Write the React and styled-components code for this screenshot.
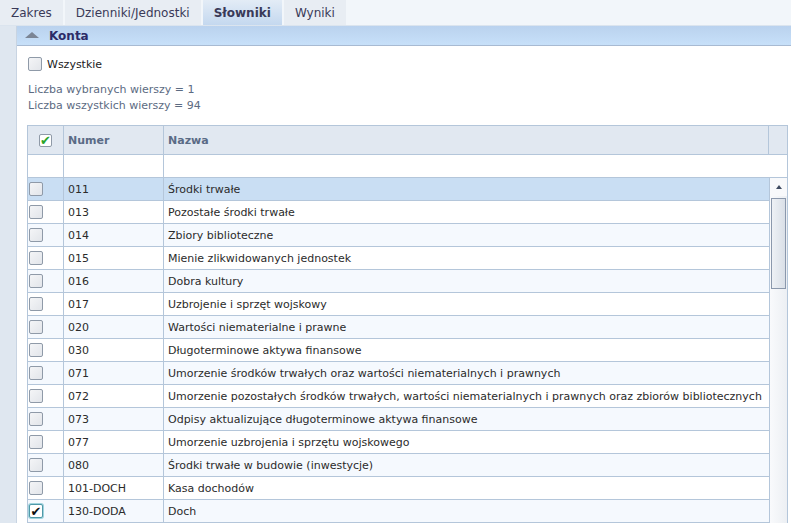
import React from 'react';
import styled, { createGlobalStyle } from 'styled-components';

const GlobalStyle = createGlobalStyle`
    html, body {
        margin: 0;
        padding: 0;
        background: #ffffff;
        overflow: hidden;
    }
    body {
        font-family: "DejaVu Sans", Verdana, sans-serif;
    }
`;

const Page = styled.div`
    width: 791px;
    height: 523px;
    overflow: hidden;
    display: flex;
    flex-direction: column;
`;

const TabBar = styled.div`
    flex: none;
    display: flex;
    gap: 2px;
    height: 26px;
    background: #f2f6fa;
    border-bottom: 1px solid #dbe4ee;
    box-sizing: border-box;
`;

const Tab = styled.div`
    padding: 0 11px;
    line-height: 26px;
    font-size: 12px;
    color: #3a3a58;
    font-weight: ${props => props.active ? 'bold' : 'normal'};
    background: ${props => props.active
        ? 'linear-gradient(180deg, #e3ecf6 0%, #c4d8ef 100%)'
        : '#e8edf3'};
`;

const Main = styled.div`
    flex: 1;
    display: flex;
    min-height: 0;
`;

const SideStrip = styled.div`
    flex: none;
    width: 16px;
    background: #dfe7f0;
    border-right: 1px solid #c8d4e2;
`;

const Panel = styled.div`
    flex: 1;
    display: flex;
    flex-direction: column;
    min-width: 0;
`;

const PanelHeader = styled.div`
    flex: none;
    height: 19px;
    display: flex;
    align-items: center;
    background: linear-gradient(180deg, #bad2ee 0%, #c7e0f9 100%);
    border-bottom: 1px solid #a8bad2;
`;

const CollapseArrow = styled.span`
    width: 0;
    height: 0;
    margin: 0 10px 2px 8px;
    border-left: 7px solid transparent;
    border-right: 7px solid transparent;
    border-bottom: 6px solid #7b8595;
`;

const PanelTitle = styled.span`
    font-size: 12px;
    font-weight: bold;
    color: #2c2c68;
`;

const PanelBody = styled.div`
    flex: none;
    padding: 11px 5px 0 10px;
`;

const CheckRow = styled.label`
    display: flex;
    align-items: center;
    gap: 5px;
    margin-left: 1px;
    font-size: 11px;
    color: #222222;
    height: 14px;
`;

const Box = styled.span`
    box-sizing: border-box;
    display: inline-flex;
    align-items: center;
    justify-content: center;
    width: ${props => props.size}px;
    height: ${props => props.size}px;
    flex: none;
    border: 1px solid ${props => props.focused ? '#4f98a8' : '#8f9aa8'};
    box-shadow: ${props => props.focused ? '0 0 0 1px #9fd3dd' : 'none'};
    border-radius: 2px;
    background: ${props => props.checked
        ? '#ffffff'
        : 'linear-gradient(135deg, #f4f5f7 0%, #e2e5ea 100%)'};
    color: ${props => props.tone === 'green' ? '#2aa52a' : '#111111'};
    font-size: 13px;
    font-weight: bold;
    line-height: 1;
    overflow: hidden;
`;

const Info = styled.div`
    margin-top: 11px;
    margin-left: 1px;
    font-size: 11px;
    line-height: 16px;
    color: #5c6b82;
`;

const Grid = styled.div`
    margin-top: 11px;
    width: 759px;
    border-left: 1px solid #b4c6da;
    border-right: 1px solid #b4c6da;
    border-top: 1px solid #b4c6da;
    font-size: 11px;
    color: #2b2b2b;
`;

const HeadRow = styled.div`
    display: grid;
    grid-template-columns: 36px 100px 605px 1fr;
    height: 28px;
    background: #e1e8f1;
    border-bottom: 1px solid #b4c6da;
`;

const HeadCell = styled.div`
    display: flex;
    align-items: center;
    justify-content: ${props => props.center ? 'center' : 'flex-start'};
    padding-left: ${props => props.center ? 0 : 4}px;
    border-right: ${props => props.last ? 'none' : '1px solid #b4c6da'};
    font-weight: bold;
    color: #5a6b86;
`;

const FilterRow = styled.div`
    display: grid;
    grid-template-columns: 36px 100px 1fr;
    height: 22px;
    background: #ffffff;
    border-bottom: 1px solid #b4c6da;
`;

const FilterCell = styled.div`
    border-right: ${props => props.last ? 'none' : '1px solid #b4c6da'};
`;

const BodyArea = styled.div`
    display: flex;
`;

const Rows = styled.div`
    width: 741px;
    border-right: 1px solid #b4c6da;
`;

const Row = styled.div`
    display: grid;
    grid-template-columns: 36px 100px 1fr;
    height: 22px;
    border-bottom: 1px solid #b4c6da;
    background: ${props => props.selected ? '#c9def3' : props.odd ? '#ffffff' : '#f5f9fe'};
`;

const Cell = styled.div`
    display: flex;
    align-items: center;
    padding-left: ${props => props.box ? 1 : 4}px;
    border-right: ${props => props.last ? 'none' : '1px solid #b4c6da'};
    white-space: nowrap;
    overflow: hidden;
`;

const ScrollBar = styled.div`
    flex: 1;
    display: flex;
    flex-direction: column;
    align-items: center;
    background: linear-gradient(90deg, #f9fafc 0%, #eceff3 100%);
`;

const ScrollUp = styled.div`
    width: 16px;
    height: 18px;
    display: flex;
    align-items: center;
    justify-content: center;
    background: #f8f9fb;
    &::after {
        content: '';
        border-left: 3px solid transparent;
        border-right: 3px solid transparent;
        border-bottom: 4px solid #3e4a60;
    }
`;

const ScrollThumb = styled.div`
    box-sizing: border-box;
    margin-top: 2px;
    width: 15px;
    height: 91px;
    border: 1px solid #8b98ac;
    background: linear-gradient(90deg, #eef1f5 0%, #d9dfe7 100%);
`;

const accounts = [
    ['011', 'Środki trwałe'],
    ['013', 'Pozostałe środki trwałe'],
    ['014', 'Zbiory biblioteczne'],
    ['015', 'Mienie zlikwidowanych jednostek'],
    ['016', 'Dobra kultury'],
    ['017', 'Uzbrojenie i sprzęt wojskowy'],
    ['020', 'Wartości niematerialne i prawne'],
    ['030', 'Długoterminowe aktywa finansowe'],
    ['071', 'Umorzenie środków trwałych oraz wartości niematerialnych i prawnych'],
    ['072', 'Umorzenie pozostałych środków trwałych, wartości niematerialnych i prawnych oraz zbiorów bibliotecznych'],
    ['073', 'Odpisy aktualizujące długoterminowe aktywa finansowe'],
    ['077', 'Umorzenie uzbrojenia i sprzętu wojskowego'],
    ['080', 'Środki trwałe w budowie (inwestycje)'],
    ['101-DOCH', 'Kasa dochodów'],
    ['130-DODA', 'Doch'],
];

const tabs = ['Zakres', 'Dzienniki/Jednostki', 'Słowniki', 'Wyniki'];

export default function App() {
    const checkedId = '130-DODA';

    return (
        <Page>
            <GlobalStyle />
            <TabBar>
                {tabs.map((tab) => (
                    <Tab key={tab} active={tab === 'Słowniki'}>{tab}</Tab>
                ))}
            </TabBar>
            <Main>
                <SideStrip />
                <Panel>
                    <PanelHeader>
                        <CollapseArrow />
                        <PanelTitle>Konta</PanelTitle>
                    </PanelHeader>
                    <PanelBody>
                        <CheckRow>
                            <Box size={14} />
                            Wszystkie
                        </CheckRow>
                        <Info>
                            <div>Liczba wybranych wierszy = 1</div>
                            <div>Liczba wszystkich wierszy = 94</div>
                        </Info>
                        <Grid>
                            <HeadRow>
                                <HeadCell center>
                                    <Box size={13} checked tone="green">✔</Box>
                                </HeadCell>
                                <HeadCell>Numer</HeadCell>
                                <HeadCell>Nazwa</HeadCell>
                                <HeadCell last />
                            </HeadRow>
                            <FilterRow>
                                <FilterCell />
                                <FilterCell />
                                <FilterCell last />
                            </FilterRow>
                            <BodyArea>
                                <Rows>
                                    {accounts.map(([id, name], index) => {
                                        const checked = id === checkedId;
                                        return (
                                            <Row key={id} odd={index % 2 === 1} selected={index === 0}>
                                                <Cell box>
                                                    <Box size={14} checked={checked} focused={checked}>
                                                        {checked ? '✔' : ''}
                                                    </Box>
                                                </Cell>
                                                <Cell>{id}</Cell>
                                                <Cell last>{name}</Cell>
                                            </Row>
                                        );
                                    })}
                                </Rows>
                                <ScrollBar>
                                    <ScrollUp />
                                    <ScrollThumb />
                                </ScrollBar>
                            </BodyArea>
                        </Grid>
                    </PanelBody>
                </Panel>
            </Main>
        </Page>
    );
}
